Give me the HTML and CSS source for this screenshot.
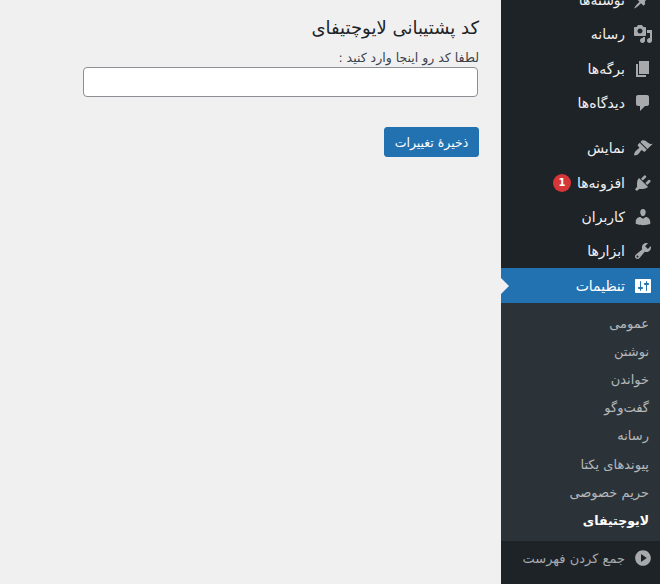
FILE: index.html
```html
<!DOCTYPE html>
<html lang="fa" dir="rtl">
<head>
    <meta charset="UTF-8">
    <meta name="viewport" content="width=device-width, initial-scale=1.0">
    <title>کد پشتیبانی لایوچتیفای</title>
    <link rel="stylesheet" href="styles.css">
</head>
<body>
    <div class="layout">
        <nav class="sidebar">
            <ul class="menu">
                <li class="menu-item">
                    <svg class="icon" viewBox="0 0 20 20"><path d="M10.44 3.02l1.82-1.82 6.36 6.35-1.83 1.82c-1.05-.68-2.48-.57-3.41.36l-.75.75c-.92.93-1.04 2.35-.35 3.41l-1.83 1.82-2.41-2.41-2.8 2.79c-.42.42-3.38 2.71-3.8 2.29s1.86-3.39 2.28-3.81l2.79-2.79L4.1 9.36l1.83-1.82c1.05.69 2.48.57 3.4-.36l.75-.75c.93-.92 1.05-2.35.36-3.41z"/></svg>
                    <span>نوشته‌ها</span>
                </li>
                <li class="menu-item">
                    <svg class="icon" viewBox="0 0 20 20"><path d="M13 11V4c0-.55-.45-1-1-1h-1.67L9 1H5L3.67 3H2c-.55 0-1 .45-1 1v7c0 .55.45 1 1 1h10c.55 0 1-.45 1-1zM7 4.5c1.38 0 2.5 1.12 2.5 2.5S8.38 9.5 7 9.5 4.5 8.38 4.5 7 5.62 4.5 7 4.5zM14 6h5v10.5c0 1.38-1.12 2.5-2.5 2.5S14 17.88 14 16.5s1.12-2.5 2.5-2.5c.17 0 .34.02.5.05V9h-3V6zm-4 8.05V13h2v3.5c0 1.38-1.12 2.5-2.5 2.5S7 17.88 7 16.5 8.12 14 9.5 14c.17 0 .34.02.5.05z"/></svg>
                    <span>رسانه</span>
                </li>
                <li class="menu-item">
                    <svg class="icon" viewBox="0 0 20 20"><path d="M6 15V2h10v13H6zm-1 1h8v2H3V5h2v11z"/></svg>
                    <span>برگه‌ها</span>
                </li>
                <li class="menu-item menu-gap">
                    <svg class="icon" viewBox="0 0 20 20"><path d="M5 2h9c1.1 0 2 .9 2 2v7c0 1.1-.9 2-2 2h-2l-5 5v-5H5c-1.1 0-2-.9-2-2V4c0-1.1.9-2 2-2z"/></svg>
                    <span>دیدگاه‌ها</span>
                </li>
                <li class="menu-item">
                    <svg class="icon" viewBox="0 0 20 20"><path d="M14.48 11.06L7.41 3.99l1.5-1.5c.5-.56 2.3-.47 3.51.32 1.21.8 1.43 1.28 2.91 2.1 1.18.64 2.45 1.26 4.45.85zM13.77 11.77L6.7 4.7 4.93 6.47c-.39.39-.39 1.02 0 1.41l1.06 1.06c.39.39.39 1.03 0 1.42-.6.6-1.43 1.11-2.21 1.69-.35.26-.7.53-1.01.84C1.5 14 .8 16.5 1.2 17.27 2 17.7 4.5 17 5.58 15.7c.31-.31.58-.66.85-1.01.58-.78 1.09-1.61 1.68-2.21.39-.39 1.03-.39 1.42 0l1.06 1.06c.39.39 1.02.39 1.41 0z"/></svg>
                    <span>نمایش</span>
                </li>
                <li class="menu-item">
                    <svg class="icon" viewBox="0 0 20 20"><path d="M13.11 4.36L9.87 7.6 8 5.73l3.24-3.24c.35-.34 1.05-.2 1.56.32.52.51.66 1.21.31 1.55zm-8 1.77l.91-1.12 9.01 9.01-1.19.84c-.71.71-2.63 1.16-3.82 1.16H6.14L4.9 17.26c-.59.59-1.54.59-2.12 0-.59-.58-.59-1.53 0-2.12l1.24-1.24v-3.88c0-1.13.4-3.19 1.09-3.89zm7.26 3.97l3.24-3.24c.34-.35 1.04-.21 1.55.31.52.51.66 1.21.31 1.55l-3.24 3.25z"/></svg>
                    <span>افزونه‌ها</span>
                    <span class="badge">1</span>
                </li>
                <li class="menu-item">
                    <svg class="icon" viewBox="0 0 20 20"><path d="M10 9.25c-2.27 0-2.73-3.44-2.73-3.44C7 4.02 7.82 2 9.97 2c2.16 0 2.98 2.02 2.71 3.81 0 0-.41 3.44-2.68 3.44zm0 2.57L12.72 10c2.39 0 4.52 2.33 4.52 4.53v2.49s-3.65 1.13-7.24 1.13c-3.65 0-7.24-1.13-7.24-1.13v-2.49c0-2.25 1.94-4.48 4.47-4.48z"/></svg>
                    <span>کاربران</span>
                </li>
                <li class="menu-item">
                    <svg class="icon" viewBox="0 0 20 20"><path d="M16.68 9.77c-1.34 1.34-3.3 1.67-4.95.99l-5.41 6.52c-.99.99-2.59.99-3.58 0s-.99-2.59 0-3.57l6.52-5.42c-.68-1.65-.35-3.61.99-4.95 1.28-1.28 3.12-1.62 4.72-1.06l-2.89 2.89 2.82 2.82 2.86-2.87c.53 1.58.18 3.39-1.08 4.65zM3.81 16.21c.4.39 1.04.39 1.43 0 .4-.4.4-1.04 0-1.43-.39-.4-1.03-.4-1.43 0-.39.39-.39 1.03 0 1.43z"/></svg>
                    <span>ابزارها</span>
                </li>
                <li class="menu-item current">
                    <svg class="icon" viewBox="0 0 20 20"><path d="M18 16V4c0-.55-.45-1-1-1H3c-.55 0-1 .45-1 1v12c0 .55.45 1 1 1h14c.55 0 1-.45 1-1zM8 11h1c.55 0 1 .45 1 1s-.45 1-1 1H8v1.5c0 .28-.22.5-.5.5s-.5-.22-.5-.5V13H6c-.55 0-1-.45-1-1s.45-1 1-1h1V5.5c0-.28.22-.5.5-.5s.5.22.5.5V11zm5-2h-1c-.55 0-1-.45-1-1s.45-1 1-1h1V5.5c0-.28.22-.5.5-.5s.5.22.5.5V7h1c.55 0 1 .45 1 1s-.45 1-1 1h-1v5.5c0 .28-.22.5-.5.5s-.5-.22-.5-.5V9z"/></svg>
                    <span>تنظیمات</span>
                </li>
            </ul>
            <ul class="submenu">
                <li>عمومی</li>
                <li>نوشتن</li>
                <li>خواندن</li>
                <li>گفت‌وگو</li>
                <li>رسانه</li>
                <li>پیوندهای یکتا</li>
                <li>حریم خصوصی</li>
                <li class="active">لایوچتیفای</li>
            </ul>
            <div class="collapse">
                <svg class="icon flip" viewBox="0 0 20 20"><path d="M10 2.16c4.33 0 7.84 3.51 7.84 7.84s-3.51 7.84-7.84 7.84S2.16 14.33 2.16 10 5.71 2.16 10 2.16zm2 11.72V6.12L6.18 9.97z"/></svg>
                <span>جمع کردن فهرست</span>
            </div>
        </nav>
        <main class="content">
            <h1>کد پشتیبانی لایوچتیفای</h1>
            <form>
                <label for="code">لطفا کد رو اینجا وارد کنید :</label>
                <input type="text" id="code">
                <button type="button" class="submit-btn">ذخیرهٔ تغییرات</button>
            </form>
        </main>
    </div>
</body>
</html>
```

FILE: styles.css
```css
* {
    margin: 0;
    padding: 0;
    box-sizing: border-box;
}

body {
    background: #f0f0f1;
    color: #3c434a;
    font-family: Tahoma, "DejaVu Sans", sans-serif;
    font-size: 13px;
    height: 584px;
    overflow: hidden;
}

.layout {
    display: flex;
    height: 584px;
}

/* Sidebar */
.sidebar {
    width: 159px;
    height: 584px;
    flex-shrink: 0;
    background: #1d2327;
    overflow: hidden;
    display: flex;
    flex-direction: column;
}

.menu, .submenu {
    list-style: none;
}

.menu {
    margin-top: -17px;
}

.menu-item {
    display: flex;
    align-items: center;
    gap: 8px;
    height: 34.3px;
    padding-right: 7px;
    color: #f0f0f1;
    font-size: 14px;
    white-space: nowrap;
}

.menu-gap {
    margin-bottom: 11px;
}

.icon {
    width: 20px;
    height: 20px;
    fill: #a7aaad;
    flex-shrink: 0;
}

.flip {
    transform: scaleX(-1);
}

.badge {
    width: 18px;
    height: 18px;
    border-radius: 50%;
    background: #d63638;
    color: #fff;
    font-size: 10px;
    font-weight: bold;
    line-height: 18px;
    text-align: center;
    margin-right: -2px;
}

.current {
    position: relative;
    background: #2271b1;
    color: #fff;
}

.current .icon {
    fill: #fff;
}

.current::after {
    content: "";
    position: absolute;
    left: 0;
    top: 50%;
    margin-top: -8px;
    border: 8px solid transparent;
    border-left-color: #f0f0f1;
}

.submenu {
    background: #2c3338;
    padding: 7px 0 6px;
}

.submenu li {
    height: 28.2px;
    line-height: 28px;
    padding-right: 11px;
    color: #b4b8bc;
    font-size: 13px;
    white-space: nowrap;
}

.submenu .active {
    color: #fff;
    font-weight: bold;
    font-size: 12.5px;
}

.collapse {
    display: flex;
    align-items: center;
    gap: 8px;
    height: 34px;
    padding-right: 7px;
    color: #a7aaad;
    font-size: 13px;
    white-space: nowrap;
}

/* Main content */
.content {
    flex: 1;
    padding: 16px 22px 0 22px;
}

h1 {
    color: #1d2327;
    font-size: 18px;
    font-weight: 400;
    line-height: 24px;
    margin-bottom: 10px;
}

label {
    display: block;
    line-height: 16px;
    font-size: 12.5px;
}

input {
    display: block;
    width: 395px;
    height: 30px;
    margin-top: 1px;
    margin-right: 1px;
    background: #fff;
    border: 1px solid #8c8f94;
    border-radius: 4px;
}

.submit-btn {
    display: block;
    width: 95px;
    height: 30px;
    margin-top: 30px;
    background: #2271b1;
    color: #fff;
    border: 1px solid #2271b1;
    border-radius: 3px;
    font-family: inherit;
    font-size: 12.5px;
}
```
